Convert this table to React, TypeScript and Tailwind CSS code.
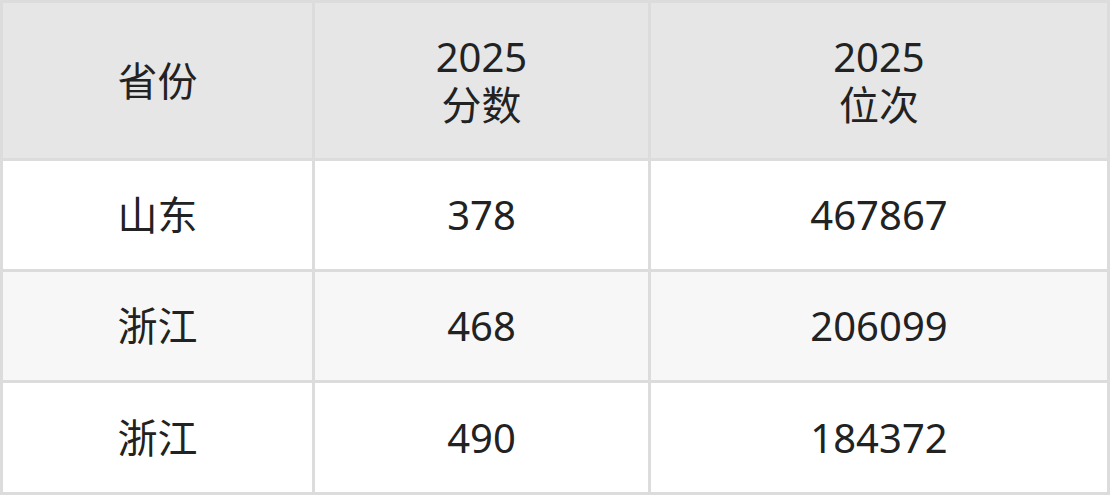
export default function App() {
  const rows = [
    ["山东", "378", "467867"],
    ["浙江", "468", "206099"],
    ["浙江", "490", "184372"],
  ];
  return (
    <div
      className="w-[1110px] h-[495px] bg-[#dcdcdc] p-[3px] grid grid-cols-[309px_333px_456px] grid-rows-[155px_108px_108px_109px] gap-[3px] text-[#222222] text-[40px] leading-[48px]"
      style={{ fontFamily: '"Noto Sans", "Noto Sans CJK SC", sans-serif' }}
    >
      <div className="bg-[#e6e6e6] flex items-center justify-center">省份</div>
      <div className="bg-[#e6e6e6] flex flex-col items-center justify-center">
        <span>2025</span>
        <span>分数</span>
      </div>
      <div className="bg-[#e6e6e6] flex flex-col items-center justify-center">
        <span>2025</span>
        <span>位次</span>
      </div>
      {rows.map((r, i) =>
        r.map((c, j) => (
          <div
            key={`${i}-${j}`}
            className={`${i % 2 === 1 ? "bg-[#f7f7f7]" : "bg-white"} flex items-center justify-center`}
          >
            {c}
          </div>
        ))
      )}
    </div>
  );
}
